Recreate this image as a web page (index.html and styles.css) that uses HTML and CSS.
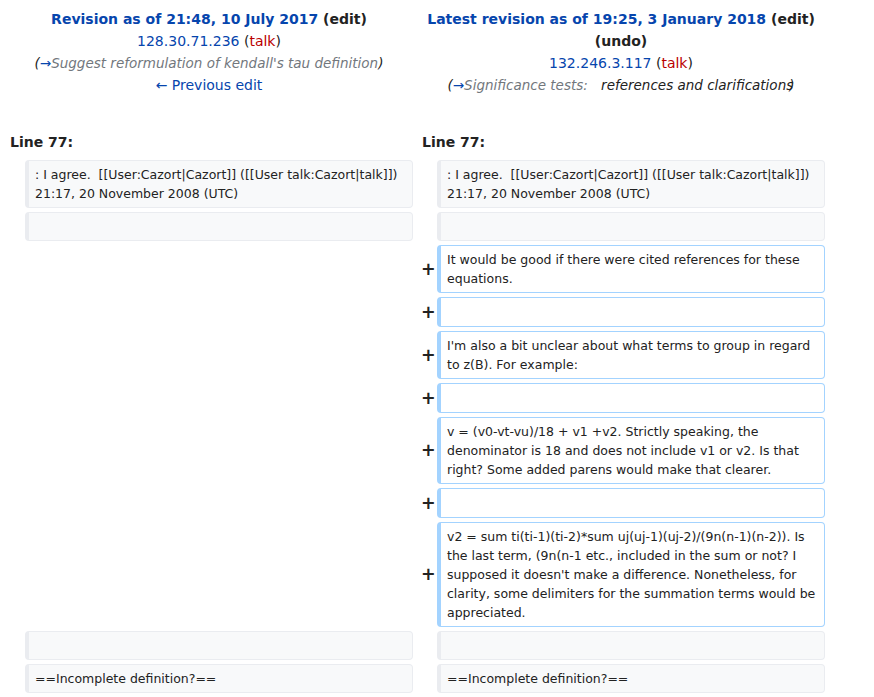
FILE: index.html
```html
<!DOCTYPE html>
<html lang="en">
<head>
<meta charset="utf-8">
<title>Difference between revisions</title>
<link rel="stylesheet" href="styles.css">
</head>
<body>
<table class="diff">
  <colgroup>
    <col class="col-marker">
    <col class="col-content">
    <col class="col-marker">
    <col class="col-content">
  </colgroup>
  <tr>
    <td colspan="2" class="diff-title">
      <div class="title-line"><a class="rev-link" href="#">Revision as of 21:48, 10 July 2017</a> <span class="act">(edit)</span></div>
      <div><a class="link" href="#">128.30.71.236</a> (<a class="new" href="#">talk</a>)</div>
      <div class="comment">(<span class="autocomment"><a class="link" href="#">→</a>Suggest reformulation of kendall's tau definition</span>)</div>
      <div><a class="link" href="#">← Previous edit</a></div>
    </td>
    <td colspan="2" class="diff-title">
      <div class="title-line"><a class="rev-link" href="#">Latest revision as of 19:25, 3 January 2018</a> <span class="act">(edit)</span> <span class="act">(undo)</span></div>
      <div><a class="link" href="#">132.246.3.117</a> (<a class="new" href="#">talk</a>)</div>
      <div class="comment">(<span class="autocomment"><a class="link" href="#">→</a>Significance tests:</span> <span class="rest">references and clarifications</span><span class="close">)</span></div>
    </td>
  </tr>
  <tr class="spacer"><td colspan="4"></td></tr>
  <tr>
    <td colspan="2" class="lineno">Line 77:</td>
    <td colspan="2" class="lineno">Line 77:</td>
  </tr>
  <tr>
    <td class="marker"></td>
    <td class="context"><div>: I agree.  [[User:Cazort|Cazort]] ([[User talk:Cazort|talk]]) 21:17, 20 November 2008 (UTC)</div></td>
    <td class="marker"></td>
    <td class="context"><div>: I agree.  [[User:Cazort|Cazort]] ([[User talk:Cazort|talk]]) 21:17, 20 November 2008 (UTC)</div></td>
  </tr>
  <tr>
    <td class="marker"></td>
    <td class="context"><div>&nbsp;</div></td>
    <td class="marker"></td>
    <td class="context"><div>&nbsp;</div></td>
  </tr>
  <tr>
    <td colspan="2" class="empty"></td>
    <td class="marker">+</td>
    <td class="added"><div>It would be good if there were cited references for these equations.</div></td>
  </tr>
  <tr>
    <td colspan="2" class="empty"></td>
    <td class="marker">+</td>
    <td class="added"><div>&nbsp;</div></td>
  </tr>
  <tr>
    <td colspan="2" class="empty"></td>
    <td class="marker">+</td>
    <td class="added"><div>I'm also a bit unclear about what terms to group in regard to z(B). For example:</div></td>
  </tr>
  <tr>
    <td colspan="2" class="empty"></td>
    <td class="marker">+</td>
    <td class="added"><div>&nbsp;</div></td>
  </tr>
  <tr>
    <td colspan="2" class="empty"></td>
    <td class="marker">+</td>
    <td class="added"><div>v = (v0-vt-vu)/18 + v1 +v2. Strictly speaking, the denominator is 18 and does not include v1 or v2. Is that right? Some added parens would make that clearer.</div></td>
  </tr>
  <tr>
    <td colspan="2" class="empty"></td>
    <td class="marker">+</td>
    <td class="added"><div>&nbsp;</div></td>
  </tr>
  <tr>
    <td colspan="2" class="empty"></td>
    <td class="marker">+</td>
    <td class="added"><div>v2 = sum ti(ti-1)(ti-2)*sum uj(uj-1)(uj-2)/(9n(n-1)(n-2)). Is the last term, (9n(n-1 etc., included in the sum or not? I supposed it doesn't make a difference. Nonetheless, for clarity, some delimiters for the summation terms would be appreciated.</div></td>
  </tr>
  <tr>
    <td class="marker"></td>
    <td class="context"><div>&nbsp;</div></td>
    <td class="marker"></td>
    <td class="context"><div>&nbsp;</div></td>
  </tr>
  <tr>
    <td class="marker"></td>
    <td class="context"><div>==Incomplete definition?==</div></td>
    <td class="marker"></td>
    <td class="context"><div>==Incomplete definition?==</div></td>
  </tr>
</table>
</body>
</html>
```

FILE: styles.css
```css
html, body {
  margin: 0;
  padding: 0;
  background: #fff;
}

body {
  font-family: "DejaVu Sans", sans-serif;
  font-size: 14px;
  color: #222;
}

a {
  text-decoration: none;
}

.diff {
  table-layout: fixed;
  border-spacing: 4px;
  border: 0;
  width: 828px;
  margin: 0 0 0 1px;
}

.col-marker {
  width: 16px;
}

.col-content {
  width: 388px;
}

.diff-title {
  text-align: center;
  vertical-align: top;
  padding: 4px 7px 3px 7px;
  line-height: 22px;
}

.title-line {
  font-weight: bold;
}

.rev-link {
  color: #0645ad;
  white-space: nowrap;
}

.act {
  color: #222;
  white-space: nowrap;
}

.link {
  color: #0645ad;
}

.new {
  color: #ba0000;
}

.comment {
  font-style: italic;
  font-size: 13.5px;
  color: #222;
}

.autocomment {
  color: #72777d;
}

.rest {
  margin-left: 9px;
}

.close {
  margin-left: -4px;
}

.spacer td {
  padding: 0;
  height: 20px;
}

.lineno {
  font-weight: bold;
  text-align: left;
  padding: 4px 6px 3px 5px;
  line-height: 22px;
}

.marker {
  padding: 4.5px 4px;
  text-align: right;
  vertical-align: middle;
  font-weight: bold;
  font-size: 17.5px;
  line-height: 21px;
  color: #222;
}

.context,
.added {
  font-size: 12.5px;
  line-height: 19px;
  vertical-align: top;
  white-space: pre-wrap;
  border-style: solid;
  border-width: 1px 1px 1px 4px;
  border-radius: 4px;
  padding: 4px 6px;
  color: #222;
}

.context {
  background: #f8f9fa;
  border-color: #eaecf0;
}

.added {
  background: #fff;
  border-color: #a3d3ff;
}

.empty {
  padding: 0;
}
```
